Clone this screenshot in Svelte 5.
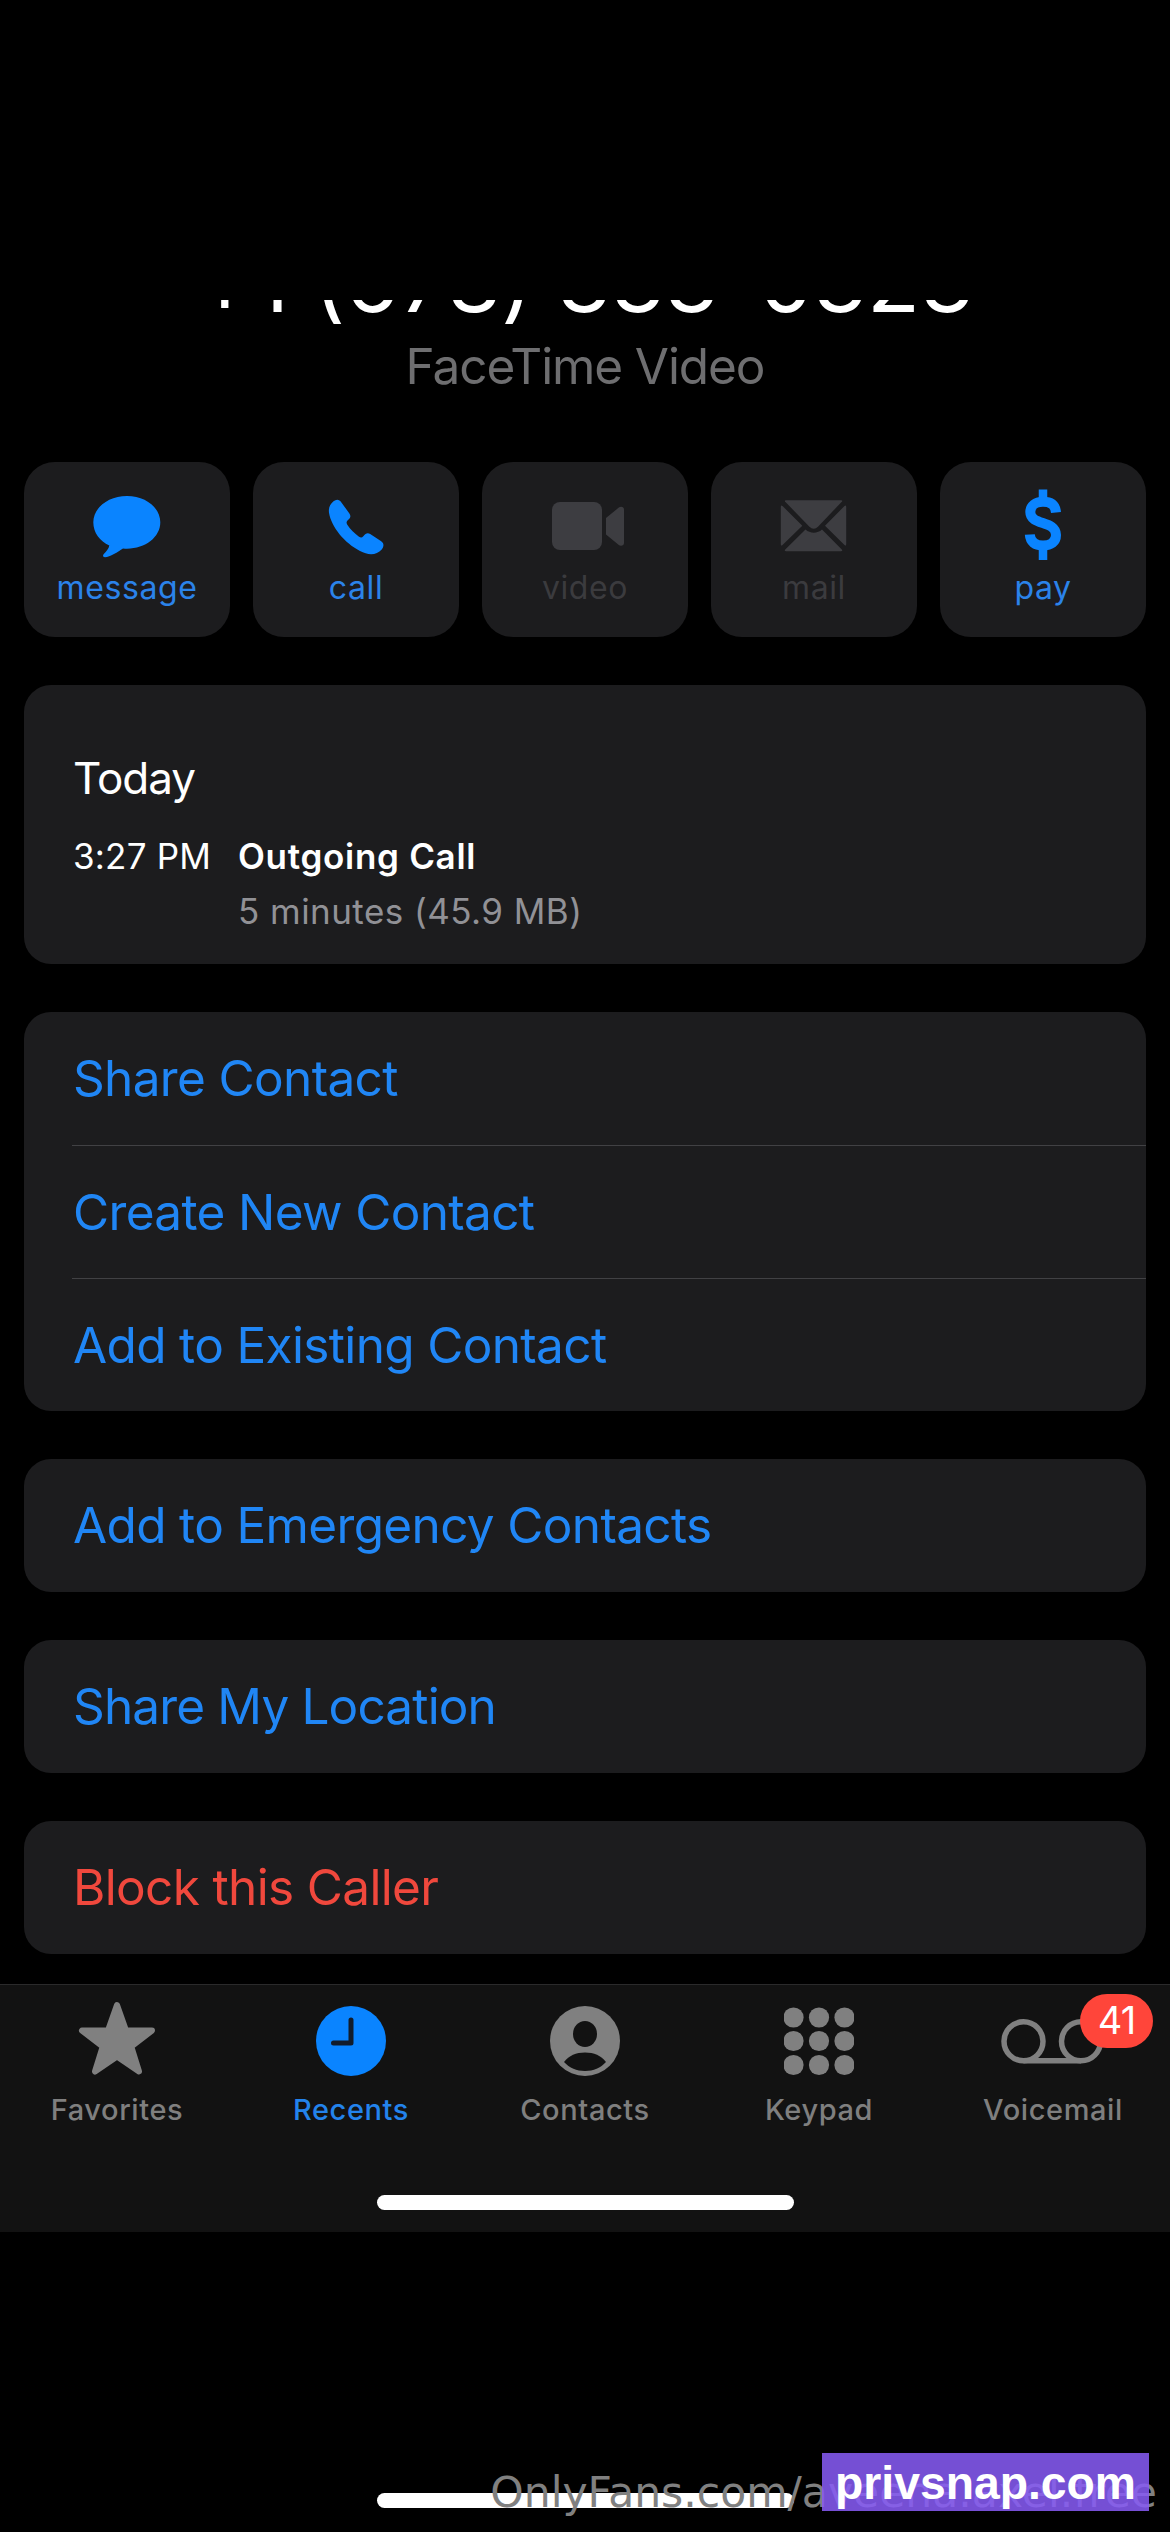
<script>
  const actions = [
    { icon: 'message', label: 'message', on: true },
    { icon: 'call', label: 'call', on: true },
    { icon: 'video', label: 'video', on: false },
    { icon: 'mail', label: 'mail', on: false },
    { icon: 'pay', label: 'pay', on: true },
  ];

  const groups = [
    { rows: ['Share Contact', 'Create New Contact', 'Add to Existing Contact'] },
    { rows: ['Add to Emergency Contacts'] },
    { rows: ['Share My Location'], tight: true },
    { rows: ['Block this Caller'], danger: true },
  ];

  const tabs = ['Favorites', 'Recents', 'Contacts', 'Keypad', 'Voicemail'];
  const dots = [9.5, 35, 60.5];
</script>

<main class="screen">
  <header class="head">
    <div class="number-clip"><h1>+1 (678) 333-0323</h1></div>
    <p class="subtitle">FaceTime Video</p>
  </header>

  <div class="actions">
    {#each actions as a}
      <button class="action" class:off={!a.on}>
        <svg viewBox="0 0 80 80" width="80" height="80">
          {#if a.icon === 'message'}
            <path d="M40 14C58.500 14 73.300 25.500 73.300 40.300S58.500 66.700 40 66.700Q38 66.700 36 66.500C31 70 23 75 18 75.200C16 75.200 15.500 73.800 16.600 72.300C19 69.500 22 66.500 22.300 63.500C13 59.500 6.300 50.800 6.300 40.300C6.300 25.500 21.500 14 40 14Z" />
          {:else if a.icon === 'call'}
            <path d="M17.500 19.300C20.300 17 23.400 17.300 25.400 20.400L33.400 31.500C35.200 34.200 34.500 35.800 31.700 38.300C30.200 39.800 30.300 41 31.300 42.800C34.500 47.600 38.400 51.500 43 54.700C44.800 55.800 46 55.600 47.300 54.200C49.500 51.500 51.500 50.200 54.200 52L65.200 59.300C68.500 61.600 67.700 65 65.700 67.500C60.500 73.500 52 73.400 44 69C28.500 61 15.300 45 13 30.800C12.400 26 13.800 22.300 17.500 19.300Z" />
          {:else if a.icon === 'video'}
            <rect x="7" y="20" width="50" height="48" rx="8" />
            <path d="M61 36L73.500 25.800C75.500 24.200 79 24.500 79 27.500V61C79 64 75.500 64.500 73.500 62.800L61 52.500Z" />
          {:else if a.icon === 'mail'}
            <path d="M12 18.200H67Q69 18.200 68 19.500L44.200 44.500Q39.700 49 35.200 44.500L11 19.500Q10.300 18.200 12 18.200Z" />
            <path d="M6.800 25Q6.800 22.500 8.500 24L28.300 43.800L8.500 63Q6.800 64.500 6.800 62ZM72.200 25Q72.200 22.500 70.500 24L51 43.800L70.500 63Q72.200 64.500 72.200 62Z" />
            <path d="M12 69.200Q10 69.200 11 67.800L31.500 47.500C36 51.700 43.500 51.700 48 47.500L68 67.800Q69 69.200 67 69.200Z" />
          {:else}
            <path class="dollar" d="M53 30.500C52.300 22.500 47.500 19.800 40 19.800C32.500 19.800 27.300 24 27.300 30C27.300 44 53 38 53 53C53 60 48 63.500 40 63.500C32 63.500 27.300 60 26.800 52.500" />
            <path class="bar" d="M40 7.500V19M40 65V78" />
          {/if}
        </svg>
        <span>{a.label}</span>
      </button>
    {/each}
  </div>

  <section class="card log">
    <h2>Today</h2>
    <div class="entry">
      <time>3:27 PM</time>
      <div>
        <strong>Outgoing Call</strong>
        <p>5 minutes (45.9 MB)</p>
      </div>
    </div>
  </section>

  {#each groups as g}
    <section class="card group" class:danger={g.danger} class:tight={g.tight}>
      {#each g.rows as r}
        <div class="row">{r}</div>
      {/each}
    </section>
  {/each}

  <nav class="tabbar">
    <div class="tabs">
      {#each tabs as t}
        <div class="tab" class:active={t === 'Recents'}>
          {#if t === 'Favorites'}
            <svg width="80" height="80" viewBox="0 0 80 80">
              <path class="star" d="M40 5L49 30.500H75L54.200 46.500L62 71.500L40 56.500L18 71.500L25.800 46.500L5 30.500H31Z" />
            </svg>
          {:else if t === 'Recents'}
            <svg width="70" height="80" viewBox="0 0 70 80">
              <circle cx="35" cy="41" r="35" />
              <path class="hands" d="M35 20V43H17.500" />
            </svg>
          {:else if t === 'Contacts'}
            <svg width="70" height="80" viewBox="0 0 70 80">
              <circle cx="35" cy="41" r="35" />
              <ellipse class="hole" cx="35" cy="34" rx="12" ry="13" />
              <path class="hole" d="M14 62C19 55.500 26 52.500 35 52.500S51 55.500 56 62C50.500 68 43.500 71 35 71S19.500 68 14 62Z" />
            </svg>
          {:else if t === 'Keypad'}
            <svg width="70" height="80" viewBox="0 0 70 80">
              {#each dots as x}
                {#each [17.5, 41, 65] as y}
                  <circle cx={x} cy={y} r="10.1" />
                {/each}
              {/each}
            </svg>
          {:else}
            <div class="voicemail">
              <svg width="104" height="80" viewBox="0 0 104 80">
                <g class="reels">
                  <circle cx="22.500" cy="41.300" r="19.500" />
                  <circle cx="80" cy="41.300" r="19.500" />
                  <path d="M22.500 60.800H80" />
                </g>
              </svg>
              <b class="badge">41</b>
            </div>
          {/if}
          <span>{t}</span>
        </div>
      {/each}
    </div>
    <i class="home"></i>
  </nav>

  <footer>
    <i class="home"></i>
    <span class="watermark">OnlyFans.com/aveena.axel.free</span>
    <span class="stamp">privsnap.com</span>
  </footer>
</main>

<style>
  :global(body) { margin: 0; background: #000; }
  .screen {
    box-sizing: border-box;
    width: 1170px;
    height: 2532px;
    padding-top: 300px;
    background: #000;
    overflow: hidden;
    font-family: Inter, 'Liberation Sans', sans-serif;
    font-size: 49.5px;
    display: flex;
    flex-direction: column;
  }
  h1, h2, p { margin: 0; font-weight: 400; }
  .head { height: 162px; text-align: center; }
  .number-clip {
    height: 38px;
    overflow: hidden;
    display: flex;
    align-items: flex-end;
    justify-content: center;
  }
  h1 {
    font-size: 87px;
    line-height: 100px;
    margin-bottom: 7px;
    color: #fff;
    white-space: nowrap;
    font-feature-settings: 'calt' 0;
  }
  .subtitle { line-height: 60px; margin-top: -2px; color: #6e6e70; letter-spacing: -1.1px; }

  .actions { display: grid; grid-template-columns: repeat(5, 206px); gap: 23px; padding: 0 24px; }
  .action {
    height: 175px;
    padding: 20px 0 0;
    border: 0;
    border-radius: 31px;
    background: #1c1c1e;
    font: 32px Inter, sans-serif;
    letter-spacing: 0.6px;
    color: #2b83ea;
    display: flex;
    flex-direction: column;
    align-items: center;
  }
  .action svg { fill: #0a84ff; }
  .action span { line-height: 40px; margin-top: 6px; }
  .action.off { color: #3b3b3e; }
  .action.off svg { fill: #3d3d41; }
  .dollar, .bar { fill: none; stroke: #0a84ff; stroke-width: 10; }
  .bar { stroke-width: 8.5; }

  .card { margin: 48px 24px 0; background: #1c1c1e; border-radius: 27px; }
  .log { box-sizing: border-box; height: 279px; padding: 65px 49px 0; color: #fff; }
  .log h2 { font-size: 44px; line-height: 56px; letter-spacing: -1px; }
  .entry { display: flex; font-size: 35px; line-height: 54px; margin-top: 23px; }
  .entry time { width: 165px; white-space: nowrap; letter-spacing: 0.2px; }
  .entry strong { font-weight: 600; letter-spacing: 0.7px; }
  .entry p { color: #919196; letter-spacing: 0.45px; padding-top: 1px; }

  .group { overflow: hidden; color: #2086f5; letter-spacing: -0.65px; }
  .tight { letter-spacing: -0.85px; }
  .row { height: 133px; line-height: 133px; margin-left: 48px; padding-left: 1px; box-sizing: border-box; }
  .row + .row { border-top: 1px solid #414144; line-height: 132px; }
  .danger { color: #f0483d; }

  .tabbar {
    box-sizing: border-box;
    height: 248px;
    margin-top: 30px;
    background: #121212;
    border-top: 1px solid #2a2a2b;
  }
  .tabs { display: grid; grid-template-columns: repeat(5, 234px); height: 210px; padding-top: 15px; box-sizing: border-box; }
  .tab { display: flex; flex-direction: column; align-items: center; color: #7f7f7f; font-size: 29px; font-weight: 500; }
  .tab svg { fill: #808080; }
  .tab span { line-height: 36px; margin-top: 12px; letter-spacing: 0.6px; }
  .tab.active { color: #2383ec; }
  .tab.active svg { fill: #0a84ff; }
  .star { stroke: #808080; stroke-width: 6; stroke-linejoin: round; }
  .hands { fill: none; stroke: #121c2b; stroke-width: 5; stroke-linecap: round; stroke-linejoin: round; }
  .hole { fill: #121212; }
  .reels { fill: none; stroke: #808080; stroke-width: 5.5; }
  .voicemail { position: relative; height: 80px; }
  .badge {
    position: absolute;
    left: 79px;
    top: -6px;
    width: 73px;
    height: 54px;
    line-height: 53px;
    border-radius: 27px;
    background: #ff453a;
    color: #fff;
    font-size: 38px;
    font-weight: 400;
    letter-spacing: -1px;
    text-align: center;
  }
  .home { display: block; width: 417px; height: 15px; border-radius: 8px; background: #fff; margin: 0 auto; }

  footer { position: relative; height: 300px; padding-top: 261px; box-sizing: border-box; }
  .watermark {
    position: absolute;
    right: 13px;
    top: 236px;
    font: 42.5px/50px 'DejaVu Sans', sans-serif;
    color: #808080;
    white-space: nowrap;
  }
  .stamp {
    position: absolute;
    left: 822px;
    top: 221px;
    width: 327px;
    height: 58px;
    line-height: 61px;
    background: rgba(134, 91, 243, 0.87);
    color: #fff;
    font-family: 'Liberation Sans', sans-serif;
    font-weight: 700;
    font-size: 46.3px;
    text-align: center;
  }
</style>
